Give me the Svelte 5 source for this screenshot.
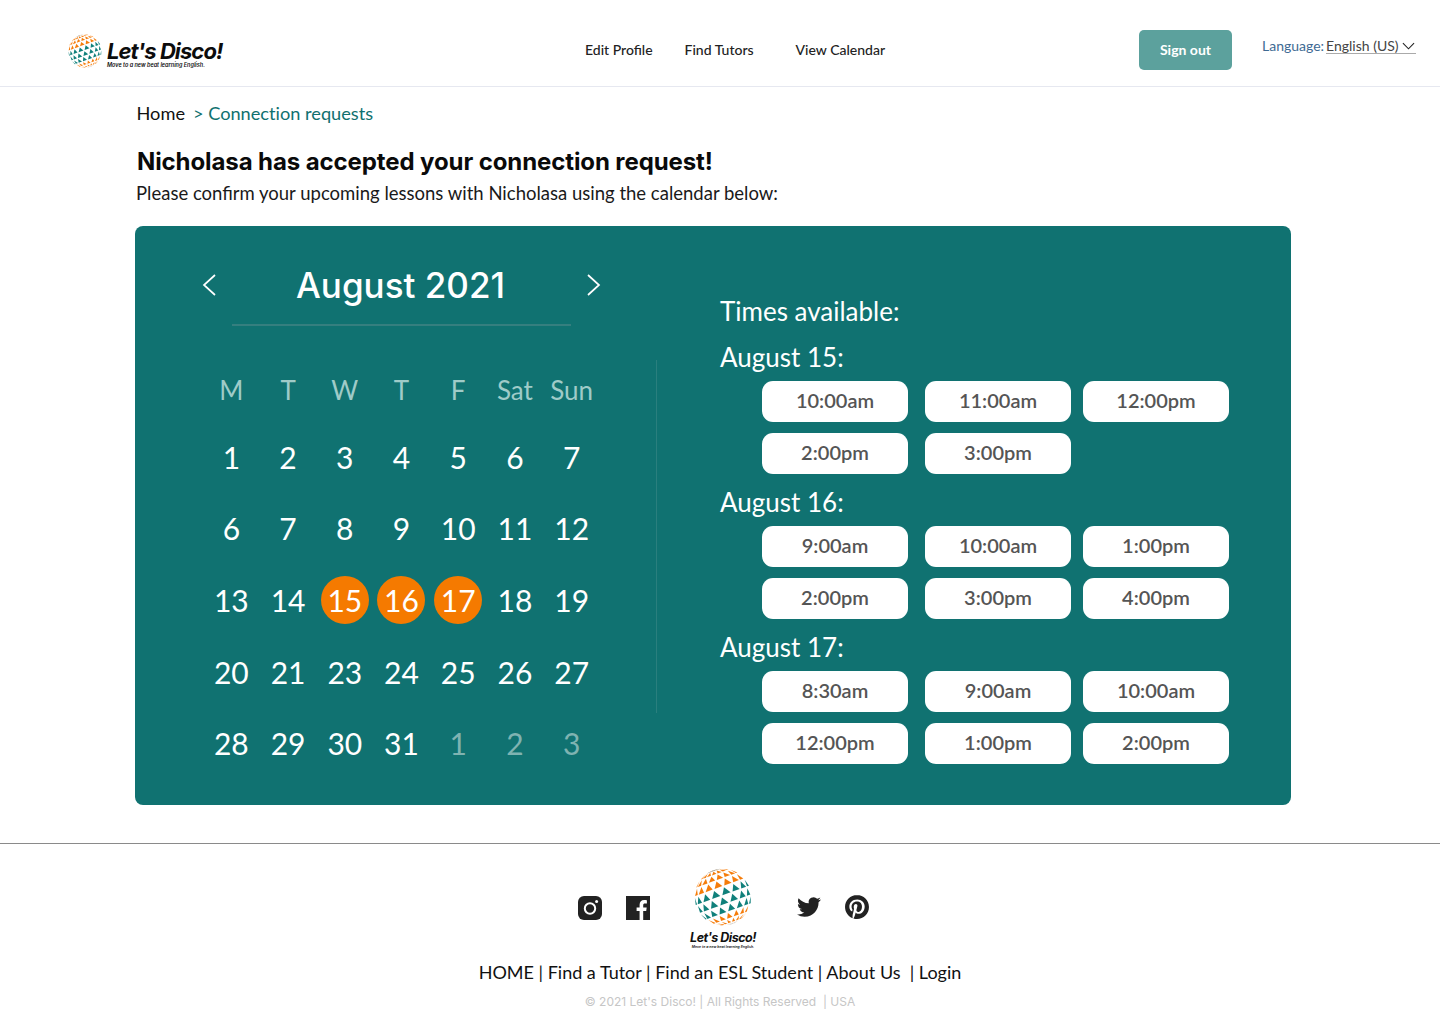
<script>
  const weekdays = ['M', 'T', 'W', 'T', 'F', 'Sat', 'Sun'];
  const days = [
    1, 2, 3, 4, 5, 6, 7,
    6, 7, 8, 9, 10, 11, 12,
    13, 14, 15, 16, 17, 18, 19,
    20, 21, 23, 24, 25, 26, 27,
    28, 29, 30, 31
  ];
  const selected = [15, 16, 17];
  const groups = [
    { label: 'August 15:', times: ['10:00am', '11:00am', '12:00pm', '2:00pm', '3:00pm'] },
    { label: 'August 16:', times: ['9:00am', '10:00am', '1:00pm', '2:00pm', '3:00pm', '4:00pm'] },
    { label: 'August 17:', times: ['8:30am', '9:00am', '10:00am', '12:00pm', '1:00pm', '2:00pm'] }
  ];

  // Triangular mosaic on a sphere, tilted like the Let's Disco! globe
  const ROWS = 10;
  const COLS = 8;
  const tilt = (20 * Math.PI) / 180;
  function project(lon, lat) {
    const x = Math.cos(lat) * Math.sin(lon);
    const y = Math.sin(lat);
    return [
      50 + 49 * (x * Math.cos(tilt) - y * Math.sin(tilt)),
      50 - 49 * (x * Math.sin(tilt) + y * Math.cos(tilt))
    ];
  }
  function colour(r, c) {
    if (r < 1 || r > 8) return '#8d7f66';
    if (r < 4) return '#f57c0a';
    if (r > 6) return '#f57c0a';
    return '#10807b';
  }
  const tris = [];
  for (let r = 0; r < ROWS; r++) {
    const top = Math.PI / 2 - (r * Math.PI) / ROWS;
    const bot = Math.PI / 2 - ((r + 0.8) * Math.PI) / ROWS;
    for (let c = -1; c < COLS; c++) {
      const off = r % 2 ? 0.5 : 0;
      const l = -Math.PI / 2 + ((c + off) * Math.PI) / COLS;
      const w = (0.8 * Math.PI) / COLS;
      if (l < -Math.PI / 2 || l + w > Math.PI / 2) continue;
      const pts = [project(l + w / 2, top), project(l, bot), project(l + w, bot)];
      tris.push({ points: pts.map((p) => p[0].toFixed(2) + ',' + p[1].toFixed(2)).join(' '), fill: colour(r, c) });
    }
  }
</script>

{#snippet globe(cls)}
  <svg class={cls} viewBox="0 0 100 100" aria-hidden="true">
    {#each tris as t}
      <polygon points={t.points} fill={t.fill} />
    {/each}
  </svg>
{/snippet}

<header class="topbar">
  <div class="brand">
    {@render globe('brand-globe')}
    <div class="brand-text">
      <span class="brand-name">Let's Disco!</span>
      <span class="brand-tag">Move to a new beat learning English.</span>
    </div>
  </div>
  <nav class="topnav">
    <a href="#p" class="n1">Edit Profile</a>
    <a href="#t" class="n2">Find Tutors</a>
    <a href="#c" class="n3">View Calendar</a>
  </nav>
  <button class="signout">Sign out</button>
  <div class="lang">
    <span class="lang-label">Language:</span>
    <span class="lang-value">English (US)
      <svg viewBox="0 0 14 8" width="13" height="8"><path d="M1 1l6 6 6-6" fill="none" stroke="#222" stroke-width="1.2" /></svg>
    </span>
  </div>
</header>

<main class="main">
  <div class="crumbs"><span>Home</span><span class="crumb-current">&gt; Connection requests</span></div>
  <h1>Nicholasa has accepted your connection request!</h1>
  <p class="lead">Please confirm your upcoming lessons with Nicholasa using the calendar below:</p>

  <section class="card">
    <div class="cal">
      <div class="cal-head">
        <svg class="chev" viewBox="0 0 16 24" width="16" height="24"><path d="M14 2L3 12l11 10" fill="none" stroke="#fff" stroke-width="1.7" /></svg>
        <div class="month">August 2021</div>
        <svg class="chev" viewBox="0 0 16 24" width="16" height="24"><path d="M2 2l11 10L2 22" fill="none" stroke="#fff" stroke-width="1.7" /></svg>
      </div>
      <div class="cal-rule"></div>
      <div class="weekdays">
        {#each weekdays as d}<span>{d}</span>{/each}
      </div>
      <div class="days">
        {#each days as d}
          <span class="day"><span class:sel={selected.includes(d)}>{d}</span></span>
        {/each}
        {#each [1, 2, 3] as d}
          <span class="day muted">{d}</span>
        {/each}
      </div>
    </div>
    <div class="divider"></div>
    <div class="times">
      <div class="times-title">Times available:</div>
      {#each groups as g}
        <div class="group-label">{g.label}</div>
        <div class="slots">
          {#each g.times as t}
            <button class="slot">{t}</button>
          {/each}
        </div>
      {/each}
    </div>
  </section>
</main>

<footer class="footer">
  <div class="social">
    <svg class="ic" viewBox="0 0 24 24"><rect width="24" height="24" rx="6" fill="#222" /><circle cx="12" cy="12.5" r="5.2" fill="none" stroke="#fff" stroke-width="2" /><circle cx="18.6" cy="5.4" r="1.5" fill="#fff" /></svg>
    <svg class="ic" viewBox="0 0 24 24"><path fill="#222" d="M0 0h24v24h-6.8v-9h3l.5-3.6h-3.5V9.2c0-1 .4-1.7 1.8-1.7h1.9V4.3c-.4 0-1.500-.2-2.800-.2-2.700 0-4.500 1.700-4.500 4.700v2.600h-3V15h3v9H0z" /></svg>
    <div class="foot-logo">
      {@render globe('foot-globe')}
      <span class="foot-name">Let's Disco!</span>
      <span class="foot-tag">Move to a new beat learning English.</span>
    </div>
    <svg class="ic raised" viewBox="0 0 24 24"><path fill="#222" d="M23.953 4.57a10 10 0 01-2.825.775 4.958 4.958 0 002.163-2.723c-.951.555-2.005.959-3.127 1.184a4.92 4.92 0 00-8.384 4.482C7.69 8.095 4.067 6.13 1.64 3.162a4.822 4.822 0 00-.666 2.475c0 1.71.87 3.213 2.188 4.096a4.904 4.904 0 01-2.228-.616v.06a4.923 4.923 0 003.946 4.827 4.996 4.996 0 01-2.212.085 4.936 4.936 0 004.604 3.417 9.867 9.867 0 01-6.102 2.105c-.39 0-.779-.023-1.17-.067a13.995 13.995 0 007.557 2.209c9.053 0 13.998-7.496 13.998-13.985 0-.21 0-.42-.015-.63A9.935 9.935 0 0024 4.59z" /></svg>
    <svg class="ic raised" viewBox="0 0 24 24"><path fill="#222" d="M12.017 0C5.396 0 .029 5.367.029 11.987c0 5.079 3.158 9.417 7.618 11.162-.105-.949-.199-2.403.041-3.439.219-.937 1.406-5.957 1.406-5.957s-.359-.72-.359-1.781c0-1.663.967-2.911 2.168-2.911 1.024 0 1.518.769 1.518 1.688 0 1.029-.653 2.567-.992 3.992-.285 1.193.6 2.165 1.775 2.165 2.128 0 3.768-2.245 3.768-5.487 0-2.861-2.063-4.869-5.008-4.869-3.41 0-5.409 2.562-5.409 5.199 0 1.033.394 2.143.889 2.741.099.12.112.225.085.345-.09.375-.293 1.199-.334 1.363-.053.225-.172.271-.401.165-1.495-.69-2.433-2.878-2.433-4.646 0-3.776 2.748-7.252 7.92-7.252 4.158 0 7.392 2.967 7.392 6.923 0 4.135-2.607 7.462-6.233 7.462-1.214 0-2.354-.629-2.758-1.379l-.749 2.848c-.269 1.045-1.004 2.352-1.498 3.146 1.123.345 2.306.535 3.55.535 6.607 0 11.985-5.365 11.985-11.987C23.97 5.39 18.592.026 11.985.026L12.017 0z" /></svg>
  </div>
  <div class="foot-nav">HOME | Find a Tutor | Find an ESL Student | About Us &nbsp;| Login</div>
  <div class="copy">© 2021 Let's Disco! | All Rights Reserved &nbsp;| USA</div>
</footer>

<style>
  :global(body) {
    margin: 0;
    background: #fff;
    font-family: Lato, "Liberation Sans", sans-serif;
    color: #111;
  }
  a {
    color: inherit;
    text-decoration: none;
  }
  button {
    font-family: inherit;
    border: 0;
    cursor: pointer;
  }

  .topbar {
    height: 72px;
    padding: 14px 0 0 68px;
    border-bottom: 1px solid #e6e8f0;
    display: flex;
    align-items: center;
  }
  .brand {
    display: flex;
    align-items: center;
    width: 517px;
    flex: none;
    padding-top: 1px;
  }
  :global(.brand-globe) {
    width: 34px;
    height: 34px;
    flex: none;
    margin-right: 5px;
  }
  .brand-text {
    display: flex;
    flex-direction: column;
    margin-top: 8px;
  }
  .brand-name {
    font-family: Inter, sans-serif;
    font-weight: 700;
    font-style: italic;
    font-size: 22px;
    line-height: 21px;
    letter-spacing: -0.9px;
    color: #0c0c0c;
  }
  .brand-tag {
    font-family: Inter, sans-serif;
    font-weight: 600;
    font-style: italic;
    font-size: 5.500px;
    line-height: 6px;
    color: #111;
  }
  .topnav {
    display: flex;
    width: 554px;
    flex: none;
    font-size: 14px;
    font-weight: 500;
    color: #222;
    margin-top: -2px;
  }
  .n1 {
    margin-right: 32px;
  }
  .n2 {
    margin-right: 42px;
  }
  .signout {
    width: 93px;
    height: 40px;
    border-radius: 5px;
    background: #5ca19d;
    color: #fff;
    font-size: 14px;
    font-weight: 700;
    flex: none;
    padding: 0 0 2px;
  }
  .lang {
    margin-left: 30px;
    font-size: 14px;
    display: flex;
    gap: 2px;
    margin-top: -9px;
  }
  .lang-label {
    color: #3e6a93;
  }
  .lang-value {
    color: #444;
    border-bottom: 1px solid #aaa;
    display: flex;
    align-items: center;
    gap: 3px;
    width: 90px;
    line-height: 15px;
  }
  .lang-value svg {
    margin-top: 2px;
  }

  .main {
    width: 1156px;
    margin: 0 0 38px 135px;
  }
  .crumbs {
    padding: 15px 0 0 1.500px;
    font-size: 18.200px;
    line-height: 22px;
    display: flex;
    gap: 8px;
    font-variant-ligatures: no-common-ligatures;
  }
  .crumb-current {
    color: #10716f;
  }
  h1 {
    margin: 22px 0 0 2px;
    font-family: Inter, sans-serif;
    font-size: 24px;
    line-height: 31px;
    font-weight: 700;
    color: #0a0a0a;
    letter-spacing: -0.1px;
  }
  .lead {
    margin: 4px 0 0 1px;
    font-size: 18.500px;
    line-height: 24px;
    color: #1a1a1a;
  }

  .card {
    margin-top: 21px;
    height: 579px;
    background: #107271;
    border-radius: 8px;
    display: flex;
    align-items: flex-start;
    color: #fff;
  }
  .cal {
    width: 397px;
    margin-left: 68px;
    flex: none;
  }
  .cal-head {
    padding: 37px 0 0 0;
    margin: 0 -2px;
    display: flex;
    align-items: center;
    justify-content: space-between;
  }
  .chev {
    flex: none;
  }
  .month {
    font-family: Inter, sans-serif;
    font-weight: 500;
    font-size: 35px;
    line-height: 44px;
    margin-right: 2px;
  }
  .cal-rule {
    margin: 17px 29px 0;
    height: 2px;
    background: #357f7f;
  }
  .weekdays,
  .days {
    display: grid;
    grid-template-columns: repeat(7, 1fr);
    text-align: center;
  }
  .weekdays {
    margin-top: 44px;
    font-size: 26px;
    line-height: 40px;
    color: #9fcbc8;
  }
  .days {
    margin-top: 11px;
    grid-auto-rows: 71.6px;
    font-size: 30px;
  }
  .day {
    display: flex;
    align-items: center;
    justify-content: center;
  }
  .sel {
    width: 48px;
    height: 48px;
    border-radius: 50%;
    background: #f57a00;
    display: flex;
    align-items: center;
    justify-content: center;
  }
  .muted {
    color: #7fb3b1;
  }
  .divider {
    width: 1px;
    height: 353px;
    margin: 134px 0 0 56px;
    background: #2a7f7e;
    flex: none;
  }
  .times {
    margin-left: 63px;
    padding-top: 69px;
  }
  .times-title,
  .group-label {
    font-size: 26px;
    line-height: 32px;
  }
  .group-label {
    margin-top: 12px;
  }
  .times-title + .group-label {
    margin-top: 14px;
  }
  .slots {
    margin: 8px 0 0 42px;
    display: grid;
    grid-template-columns: 163px 158px 146px;
    row-gap: 11px;
  }
  .slot {
    width: 146px;
    height: 41px;
    border-radius: 11px;
    background: #fff;
    color: #555;
    font-size: 20px;
    font-weight: 600;
    padding: 0 0 4px;
  }

  .footer {
    border-top: 1px solid #8a8a8a;
    padding-top: 24px;
    text-align: center;
  }
  .social {
    display: flex;
    justify-content: center;
    align-items: center;
    padding-left: 6px;
    height: 80px;
  }
  .ic {
    width: 24px;
    height: 24px;
    flex: none;
  }
  .ic + .ic {
    margin-left: 24px;
  }
  .raised {
    margin-bottom: 3px;
  }
  .foot-logo {
    width: 67px;
    margin: 0 40px;
    display: flex;
    flex-direction: column;
    align-items: center;
  }
  :global(.foot-globe) {
    width: 58px;
    height: 58px;
  }
  .foot-name {
    font-family: Inter, sans-serif;
    font-style: italic;
    font-weight: 700;
    font-size: 12.500px;
    line-height: 14px;
    letter-spacing: -0.5px;
    margin-top: 5px;
    white-space: nowrap;
  }
  .foot-tag {
    font-family: Inter, sans-serif;
    font-style: italic;
    font-weight: 600;
    font-size: 3.500px;
    line-height: 4px;
    white-space: nowrap;
  }
  .foot-nav {
    margin-top: 12px;
    font-size: 18px;
    line-height: 24px;
    color: #111;
  }
  .copy {
    margin-top: 10px;
    font-family: Inter, sans-serif;
    font-size: 12px;
    line-height: 16px;
    color: #c6c6c6;
  }
</style>
